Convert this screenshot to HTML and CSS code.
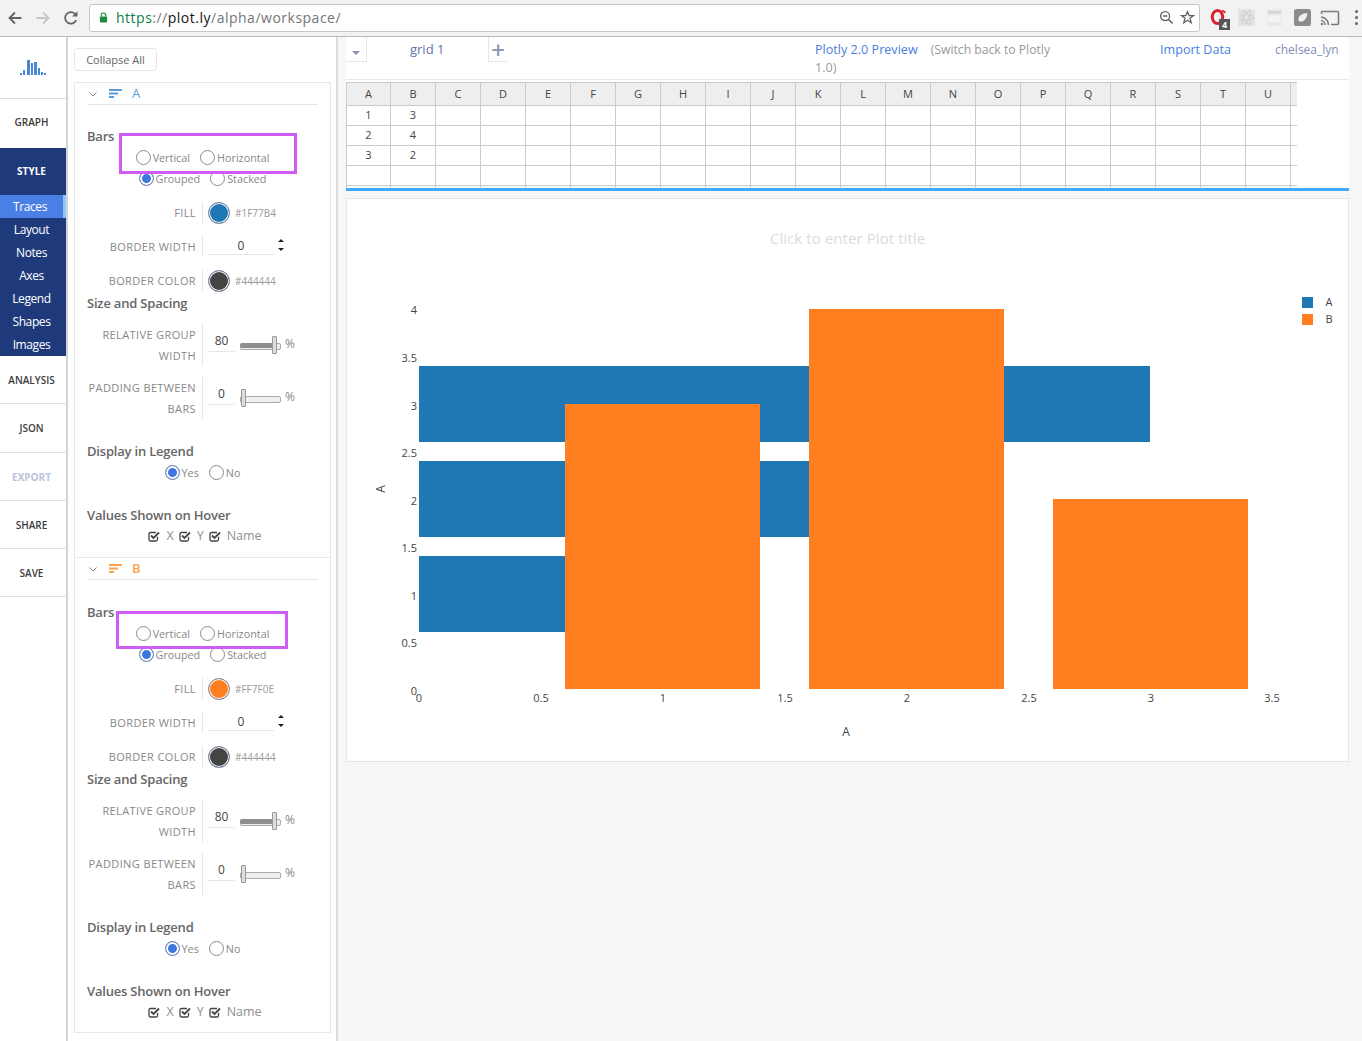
FILE: index.html
```html
<!DOCTYPE html>
<html lang="en">
<head>
    <meta charset="UTF-8">
    <title>plot.ly workspace</title>
    <link rel="stylesheet" href="styles.css">
</head>
<body>
    <header class="browser">
        <svg class="nav-icon" viewBox="0 0 16 16"><path d="M14.5 8H2.5M8 2.5L2.5 8L8 13.5" fill="none" stroke="#5f6368" stroke-width="1.8"/></svg>
        <svg class="nav-icon" viewBox="0 0 16 16"><path d="M1.5 8H13.5M8 2.5L13.5 8L8 13.5" fill="none" stroke="#c8c8c8" stroke-width="1.8"/></svg>
        <svg class="nav-icon" viewBox="0 0 16 16"><path d="M13.2 10.2A5.8 5.8 0 1 1 12.4 4.2" fill="none" stroke="#5f6368" stroke-width="1.8"/><path d="M14.5 1.2V6.6H9.1Z" fill="#5f6368"/></svg>
        <div class="url-box">
            <svg class="lock" viewBox="0 0 10 12"><path d="M2.5 5V3.5a2.5 2.5 0 0 1 5 0V5" fill="none" stroke="#1e8e3e" stroke-width="1.3"/><rect x="1" y="5" width="8" height="6.5" rx="0.8" fill="#1e8e3e"/></svg>
            <span class="url"><span class="url-https">https</span>://<span class="url-host">plot.ly</span>/alpha/workspace/</span>
            <svg class="url-icon" viewBox="0 0 16 16"><circle cx="6.5" cy="6.5" r="4.8" fill="none" stroke="#5f6368" stroke-width="1.4"/><path d="M4.2 6.5H8.8M10 10L14.5 14.5" fill="none" stroke="#5f6368" stroke-width="1.6"/></svg>
            <svg class="url-icon star" viewBox="0 0 16 16"><path d="M8 1.8L9.8 6H14.4L10.7 8.9L12 13.6L8 11L4 13.6L5.3 8.9L1.6 6H6.2Z" fill="none" stroke="#5f6368" stroke-width="1.4"/></svg>
        </div>
        <div class="extensions">
            <div class="ext-opera">
                <svg viewBox="0 0 18 20"><ellipse cx="7.5" cy="9" rx="5.2" ry="6.6" fill="none" stroke="#d9202c" stroke-width="3"/><path d="M12 2.5L15.5 4.5" stroke="#d9202c" stroke-width="2"/></svg>
                <span class="ext-badge">4</span>
            </div>
            <svg class="ext" viewBox="0 0 18 18"><rect width="18" height="18" fill="#e4e4e4"/><g fill="none" stroke="#cfcfcf"><ellipse cx="9" cy="9" rx="7.5" ry="3"/><ellipse cx="9" cy="9" rx="7.5" ry="3" transform="rotate(60 9 9)"/><ellipse cx="9" cy="9" rx="7.5" ry="3" transform="rotate(120 9 9)"/></g></svg>
            <svg class="ext" viewBox="0 0 18 18"><rect x="1" y="0" width="16" height="18" fill="#e9e9e9"/><rect x="2.5" y="2" width="13" height="3" fill="#d4d4d4"/><rect x="2.5" y="7" width="13" height="7" fill="#f4f4f4"/></svg>
            <svg class="ext" viewBox="0 0 18 18"><rect width="18" height="18" rx="3" fill="#8b8b8b"/><path d="M5 13C3.5 8 8 4 14 4.5C14 10 10.500 14.500 5 13Z" fill="#f2f2f2"/></svg>
            <svg class="ext ext-cast" viewBox="0 0 20 16"><path d="M1.5 4V2.500A1 1 0 0 1 2.500 1.500H17.500A1 1 0 0 1 18.500 2.500V13.500A1 1 0 0 1 17.500 14.500H11" fill="none" stroke="#7d7d7d" stroke-width="1.600"/><path d="M1 7A8 8 0 0 1 8.500 15M1 10.500A4.500 4.500 0 0 1 5.200 15" fill="none" stroke="#7d7d7d" stroke-width="1.500"/><circle cx="2" cy="14" r="1.300" fill="#7d7d7d"/></svg>
        </div>
        <div class="dots"><i></i><i></i><i></i></div>
    </header>

    <div class="app">
        <nav class="sidebar">
            <div class="logo">
                <svg viewBox="0 0 26 16" width="26" height="16">
                    <g fill="#4a86d8">
                        <rect x="0" y="14" width="2" height="2"/><rect x="3" y="11" width="2" height="5"/><rect x="7" y="1" width="3" height="15"/><rect x="11" y="4" width="2" height="12"/><rect x="14" y="3" width="3" height="13"/><rect x="18" y="9" width="2" height="7"/><rect x="21" y="13" width="2" height="3"/><rect x="24" y="14" width="2" height="2"/>
                    </g>
                </svg>
            </div>
            <a class="nav-item graph">GRAPH</a>
            <div class="nav-group">
                <div class="nav-title">STYLE</div>
                <a class="nav-sub active">Traces</a>
                <a class="nav-sub">Layout</a>
                <a class="nav-sub">Notes</a>
                <a class="nav-sub">Axes</a>
                <a class="nav-sub">Legend</a>
                <a class="nav-sub">Shapes</a>
                <a class="nav-sub">Images</a>
            </div>
            <a class="nav-item">ANALYSIS</a>
            <a class="nav-item">JSON</a>
            <a class="nav-item disabled">EXPORT</a>
            <a class="nav-item">SHARE</a>
            <a class="nav-item">SAVE</a>
        </nav>

        <aside class="panel">
            <button class="collapse-btn">Collapse All</button>

            <section class="trace trace-a">
                <div class="trace-head">
                    <svg class="chevron" viewBox="0 0 8 5"><path d="M0.500 0.500L4 4L7.500 0.500" fill="none" stroke="#888"/></svg>
                    <svg class="trace-icon" viewBox="0 0 13 9"><path d="M0 0H13V2H0ZM0 3.500H9V5.500H0ZM0 7H5V9H0Z" fill="#5b9bd5"/></svg>
                    <span class="trace-name">A</span>
                </div>
                <div class="highlight"></div>
                <h3 class="field-title bars-title">Bars</h3>
                <div class="radios"><span class="radio"><i></i>Vertical</span><span class="radio"><i></i>Horizontal</span></div>
                <div class="radios"><span class="radio on"><i></i>Grouped</span><span class="radio"><i></i>Stacked</span></div>

                <div class="control first">
                    <label>FILL</label>
                    <div class="control-body"><span class="swatch blue"></span><span class="hex">#1F77B4</span></div>
                </div>
                <div class="control">
                    <label>BORDER WIDTH</label>
                    <div class="control-body"><span class="num wide">0</span><span class="spinner"><i class="up"></i><i class="down"></i></span></div>
                </div>
                <div class="control">
                    <label>BORDER COLOR</label>
                    <div class="control-body"><span class="swatch dark"></span><span class="hex">#444444</span></div>
                </div>

                <h3 class="field-title spacing-title">Size and Spacing</h3>
                <div class="control tall">
                    <label>RELATIVE GROUP WIDTH</label>
                    <div class="control-body"><span class="num">80</span><span class="slider"><b class="fill"></b><b class="thumb"></b></span><span class="unit">%</span></div>
                </div>
                <div class="control tall">
                    <label>PADDING BETWEEN BARS</label>
                    <div class="control-body"><span class="num">0</span><span class="slider zero"><b class="thumb"></b></span><span class="unit">%</span></div>
                </div>

                <h3 class="field-title gap-title">Display in Legend</h3>
                <div class="radios"><span class="radio on"><i></i>Yes</span><span class="radio"><i></i>No</span></div>

                <h3 class="field-title gap-title">Values Shown on Hover</h3>
                <div class="checks">
                    <span class="check"><svg viewBox="0 0 12 12"><path d="M9.500 6.800V9.500A1.500 1.500 0 0 1 8 11H2.500A1.500 1.500 0 0 1 1 9.500V4A1.500 1.500 0 0 1 2.500 2.500H8" fill="none" stroke="#444" stroke-width="1.300"/><path d="M3 5.500L5.500 8L11 2.500" fill="none" stroke="#444" stroke-width="1.800"/></svg>X</span>
                    <span class="check"><svg viewBox="0 0 12 12"><path d="M9.500 6.800V9.500A1.500 1.500 0 0 1 8 11H2.500A1.500 1.500 0 0 1 1 9.500V4A1.500 1.500 0 0 1 2.500 2.500H8" fill="none" stroke="#444" stroke-width="1.300"/><path d="M3 5.500L5.500 8L11 2.500" fill="none" stroke="#444" stroke-width="1.800"/></svg>Y</span>
                    <span class="check"><svg viewBox="0 0 12 12"><path d="M9.500 6.800V9.500A1.500 1.500 0 0 1 8 11H2.500A1.500 1.500 0 0 1 1 9.500V4A1.500 1.500 0 0 1 2.500 2.500H8" fill="none" stroke="#444" stroke-width="1.300"/><path d="M3 5.500L5.500 8L11 2.500" fill="none" stroke="#444" stroke-width="1.800"/></svg>Name</span>
                </div>
            </section>

            <section class="trace trace-b">
                <div class="trace-head">
                    <svg class="chevron" viewBox="0 0 8 5"><path d="M0.500 0.500L4 4L7.500 0.500" fill="none" stroke="#888"/></svg>
                    <svg class="trace-icon" viewBox="0 0 13 9"><path d="M0 0H13V2H0ZM0 3.500H9V5.500H0ZM0 7H5V9H0Z" fill="#ffa04d"/></svg>
                    <span class="trace-name">B</span>
                </div>
                <div class="highlight"></div>
                <h3 class="field-title bars-title">Bars</h3>
                <div class="radios"><span class="radio"><i></i>Vertical</span><span class="radio"><i></i>Horizontal</span></div>
                <div class="radios"><span class="radio on"><i></i>Grouped</span><span class="radio"><i></i>Stacked</span></div>

                <div class="control first">
                    <label>FILL</label>
                    <div class="control-body"><span class="swatch orange"></span><span class="hex">#FF7F0E</span></div>
                </div>
                <div class="control">
                    <label>BORDER WIDTH</label>
                    <div class="control-body"><span class="num wide">0</span><span class="spinner"><i class="up"></i><i class="down"></i></span></div>
                </div>
                <div class="control">
                    <label>BORDER COLOR</label>
                    <div class="control-body"><span class="swatch dark"></span><span class="hex">#444444</span></div>
                </div>

                <h3 class="field-title spacing-title">Size and Spacing</h3>
                <div class="control tall">
                    <label>RELATIVE GROUP WIDTH</label>
                    <div class="control-body"><span class="num">80</span><span class="slider"><b class="fill"></b><b class="thumb"></b></span><span class="unit">%</span></div>
                </div>
                <div class="control tall">
                    <label>PADDING BETWEEN BARS</label>
                    <div class="control-body"><span class="num">0</span><span class="slider zero"><b class="thumb"></b></span><span class="unit">%</span></div>
                </div>

                <h3 class="field-title gap-title">Display in Legend</h3>
                <div class="radios"><span class="radio on"><i></i>Yes</span><span class="radio"><i></i>No</span></div>

                <h3 class="field-title gap-title">Values Shown on Hover</h3>
                <div class="checks">
                    <span class="check"><svg viewBox="0 0 12 12"><path d="M9.500 6.800V9.500A1.500 1.500 0 0 1 8 11H2.500A1.500 1.500 0 0 1 1 9.500V4A1.500 1.500 0 0 1 2.500 2.500H8" fill="none" stroke="#444" stroke-width="1.300"/><path d="M3 5.500L5.500 8L11 2.500" fill="none" stroke="#444" stroke-width="1.800"/></svg>X</span>
                    <span class="check"><svg viewBox="0 0 12 12"><path d="M9.500 6.800V9.500A1.500 1.500 0 0 1 8 11H2.500A1.500 1.500 0 0 1 1 9.500V4A1.500 1.500 0 0 1 2.500 2.500H8" fill="none" stroke="#444" stroke-width="1.300"/><path d="M3 5.500L5.500 8L11 2.500" fill="none" stroke="#444" stroke-width="1.800"/></svg>Y</span>
                    <span class="check"><svg viewBox="0 0 12 12"><path d="M9.500 6.800V9.500A1.500 1.500 0 0 1 8 11H2.500A1.500 1.500 0 0 1 1 9.500V4A1.500 1.500 0 0 1 2.500 2.500H8" fill="none" stroke="#444" stroke-width="1.300"/><path d="M3 5.500L5.500 8L11 2.500" fill="none" stroke="#444" stroke-width="1.800"/></svg>Name</span>
                </div>
            </section>
        </aside>

        <main class="workspace">
            <div class="grid-area">
                <div class="topbar">
                    <div class="tabs">
                        <span class="tab-caret"><i></i></span>
                        <span class="tab-name">grid 1</span>
                        <span class="tab-add">+</span>
                    </div>
                    <div class="preview">
                        <div><a>Plotly 2.0 Preview</a><span>(Switch back to Plotly</span></div>
                        <div>1.0)</div>
                    </div>
                    <a class="import">Import Data</a>
                    <a class="user">chelsea_lyn</a>
                </div>
                <div class="sheet">
                    <table>
                        <thead>
                            <tr><th class="col-a">A</th><th>B</th><th>C</th><th>D</th><th>E</th><th>F</th><th>G</th><th>H</th><th>I</th><th>J</th><th>K</th><th>L</th><th>M</th><th>N</th><th>O</th><th>P</th><th>Q</th><th>R</th><th>S</th><th>T</th><th>U</th><th class="stub"></th></tr>
                        </thead>
                        <tbody>
                            <tr><td>1</td><td>3</td><td></td><td></td><td></td><td></td><td></td><td></td><td></td><td></td><td></td><td></td><td></td><td></td><td></td><td></td><td></td><td></td><td></td><td></td><td></td><td class="stub"></td></tr>
                            <tr><td>2</td><td>4</td><td></td><td></td><td></td><td></td><td></td><td></td><td></td><td></td><td></td><td></td><td></td><td></td><td></td><td></td><td></td><td></td><td></td><td></td><td></td><td class="stub"></td></tr>
                            <tr><td>3</td><td>2</td><td></td><td></td><td></td><td></td><td></td><td></td><td></td><td></td><td></td><td></td><td></td><td></td><td></td><td></td><td></td><td></td><td></td><td></td><td></td><td class="stub"></td></tr>
                            <tr><td></td><td></td><td></td><td></td><td></td><td></td><td></td><td></td><td></td><td></td><td></td><td></td><td></td><td></td><td></td><td></td><td></td><td></td><td></td><td></td><td></td><td class="stub"></td></tr>
                            <tr><td></td><td></td><td></td><td></td><td></td><td></td><td></td><td></td><td></td><td></td><td></td><td></td><td></td><td></td><td></td><td></td><td></td><td></td><td></td><td></td><td></td><td class="stub"></td></tr>
                        </tbody>
                    </table>
                </div>
            </div>

            <div class="chart-box">
                <!-- chart drawn in page coordinates, hence the translate -->
                <svg class="chart" width="1001" height="562" viewBox="0 0 1001 562">
                    <g transform="translate(-347 -199)">
                        <text class="plot-title" x="847.500" y="244" text-anchor="middle">Click to enter Plot title</text>

                        <g fill="#1f77b4">
                            <rect x="419" y="556" width="244" height="76"/>
                            <rect x="419" y="461" width="488" height="76"/>
                            <rect x="419" y="366" width="731" height="76"/>
                        </g>
                        <g fill="#ff7f20">
                            <rect x="565" y="404" width="195" height="285"/>
                            <rect x="809" y="309" width="195" height="380"/>
                            <rect x="1053" y="499" width="195" height="190"/>
                        </g>

                        <g class="tick" text-anchor="end">
                            <text x="417" y="314">4</text>
                            <text x="417" y="362">3.5</text>
                            <text x="417" y="410">3</text>
                            <text x="417" y="457">2.5</text>
                            <text x="417" y="505">2</text>
                            <text x="417" y="552">1.5</text>
                            <text x="417" y="600">1</text>
                            <text x="417" y="647">0.5</text>
                            <text x="417" y="695">0</text>
                        </g>
                        <g class="tick" text-anchor="middle">
                            <text x="419" y="702">0</text>
                            <text x="541" y="702">0.5</text>
                            <text x="663" y="702">1</text>
                            <text x="785" y="702">1.5</text>
                            <text x="907" y="702">2</text>
                            <text x="1029" y="702">2.5</text>
                            <text x="1151" y="702">3</text>
                            <text x="1272" y="702">3.5</text>
                        </g>

                        <text class="axis-title" x="846" y="736" text-anchor="middle">A</text>
                        <text class="axis-title" transform="translate(385 489) rotate(-90)" text-anchor="middle">A</text>

                        <rect x="1302" y="297" width="11" height="11" fill="#1f77b4"/>
                        <rect x="1302" y="314" width="11" height="11" fill="#ff7f20"/>
                        <text class="tick" x="1329" y="306" text-anchor="middle">A</text>
                        <text class="tick" x="1329" y="323" text-anchor="middle">B</text>
                    </g>
                </svg>
            </div>
        </main>
    </div>
</body>
</html>
```
FILE: styles.css
```css
* { box-sizing: border-box; }
html, body { margin: 0; height: 100%; overflow: hidden; }
body { font-family: "Open Sans", sans-serif; background: #fff; color: #444; }
a { cursor: pointer; }

/* browser chrome */
.browser { height: 37px; display: flex; align-items: center; background: #f2f2f2; border-bottom: 1px solid #bcbcbc; padding: 0 0 1px 7px; }
.nav-icon { width: 16px; height: 16px; margin-right: 12px; flex: none; }
.url-box { width: 1111px; height: 28px; margin-left: -2px; display: flex; align-items: center; background: #fff; border: 1px solid #c6c6c6; border-radius: 3px; padding: 0 4px 0 9px; }
.lock { width: 9px; height: 11px; flex: none; }
.url { margin-left: 8px; font-size: 14px; letter-spacing: 0.5px; color: #757575; flex: 1; white-space: nowrap; }
.url-https { color: #0b8043; }
.url-host { color: #111; }
.url-icon { width: 15px; height: 15px; margin-left: 6px; flex: none; }
.extensions { display: flex; align-items: center; margin-left: 10px; }
.ext-opera { position: relative; width: 18px; height: 20px; margin-right: 10px; }
.ext-opera svg { display: block; width: 18px; height: 20px; }
.ext-badge { position: absolute; left: 9px; top: 11px; width: 11px; height: 11px; background: #555; color: #fff; font-size: 9px; font-weight: 700; line-height: 11px; text-align: center; }
.ext { width: 17px; height: 17px; margin-right: 11px; flex: none; }
.ext-cast { width: 20px; height: 16px; margin: 0 0 0 -2px; }
.dots { margin-left: 15px; display: flex; flex-direction: column; gap: 3px; }
.dots i { width: 3px; height: 3px; background: #666; border-radius: 50%; }

.app { display: flex; height: 1004px; }

/* left nav */
.sidebar { width: 68px; flex: none; background: #fff; border-right: 2px solid #d4d4d4; }
.logo { height: 62px; display: flex; align-items: center; justify-content: center; border-bottom: 1px solid #ddd; padding: 0 1px 1px 0; }
.nav-item { display: flex; align-items: center; justify-content: center; height: 48.300px; padding-right: 3px; font-size: 10px; font-weight: 600; color: #3c3c3c; border-bottom: 1px solid #e2e2e2; }
.nav-item.graph { height: 49px; padding-bottom: 4px; border-bottom: 0; }
.nav-item.disabled { padding-top: 1px; color: #b8c4da; font-weight: 700; }
.nav-group { background: #1f3a7b; height: 208px; }
.nav-title { height: 47px; padding: 0 3px 2px 0; display: flex; align-items: center; justify-content: center; font-size: 10px; font-weight: 700; color: #fff; }
.nav-sub { display: flex; align-items: center; justify-content: center; height: 23px; padding-right: 3px; font-size: 12px; letter-spacing: -0.4px; color: #fff; }
.nav-sub.active { background: #4a80e4; border-right: 3px solid #93c4f6; }

/* trace panel */
.panel { width: 270px; flex: none; background: #fff; border-right: 2px solid #dcdcdc; padding: 11px 6px 0 6px; }
.collapse-btn { display: block; width: 83px; height: 23px; padding: 0; background: #fff; border: 1px solid #e6e6e6; border-radius: 3px; font: 400 11px "Open Sans", sans-serif; color: #666; }
.trace { position: relative; width: 257px; border: 1px solid #e8e8e8; border-bottom: 0; padding-bottom: 10px; }
.trace-a { margin-top: 11px; padding-bottom: 11px; }
.trace-b { border-bottom: 1px solid #e8e8e8; }
.trace-head { display: flex; align-items: center; height: 22px; margin: 0 12px; padding-bottom: 1px; border-bottom: 1px solid #e6e6e6; }
.chevron { width: 8px; height: 5px; margin: 3px 0 0 2px; }
.trace-icon { width: 13px; height: 9px; margin-left: 12px; }
.trace-name { margin-left: 10px; font-size: 13px; }
.trace-a .trace-name { color: #5b9bd5; }
.trace-b .trace-name { color: #ffa04d; font-weight: 600; }

.highlight { position: absolute; border: 3px solid #cf5cf5; z-index: 1; }
.trace-a .highlight { left: 44px; top: 50px; width: 178px; height: 41px; }
.trace-b .highlight { left: 41px; top: 53px; width: 172px; height: 38px; }

.field-title { margin: 0 12px; height: 21px; font-size: 13px; font-weight: 600; letter-spacing: -0.2px; line-height: 21px; color: #666; }
.bars-title { margin-top: 21px; }
.trace-b .bars-title { margin-top: 22px; }
.spacing-title { margin-top: 4px; margin-bottom: 12px; height: 17px; line-height: 17px; }
.gap-title { margin-top: 22px; }

.radios { height: 21px; display: flex; justify-content: center; align-items: center; gap: 10px; font-size: 10.800px; color: #888; }
.radio { display: flex; align-items: center; gap: 2px; }
.radio i { width: 15px; height: 15px; border: 1px solid #8a8a8a; border-radius: 50%; background: #fff; }
.radio.on i { background: #3f77e0; box-shadow: inset 0 0 0 2px #fff; border-color: #7d8ba8; }

.control { display: flex; align-items: center; height: 21px; margin-top: 13px; }
.control label { width: 121px; padding-left: 12px; text-align: right; font-size: 11px; letter-spacing: 0.38px; line-height: 21px; color: #888; }
.control-body { display: flex; align-items: center; height: 100%; margin-left: 6px; padding-left: 5px; border-left: 1px solid #e6e6e6; }
.control.tall { height: 42px; margin-top: 11px; }
.spacing-title + .control.tall { margin-top: 0; }
.swatch { width: 22px; height: 22px; border-radius: 50%; border: 1px solid #7d8ba8; box-shadow: inset 0 0 0 1px #fff; }
.swatch.blue { background: #1f77b4; }
.swatch.orange { background: #ff7f20; }
.swatch.dark { background: #444; }
.hex { margin-left: 5px; font-size: 10px; color: #999; }
.num { width: 27px; height: 20px; text-align: center; font-size: 12px; line-height: 18px; color: #444; border-bottom: 1px solid #e6e6e6; }
.tall .num { margin-bottom: 6px; }
.num.wide { width: 66px; margin-bottom: 4px; line-height: 21px; }
.spinner { display: flex; flex-direction: column; gap: 6px; margin-left: 4px; margin-bottom: 3px; }
.spinner i { width: 0; height: 0; border-left: 3px solid transparent; border-right: 3px solid transparent; }
.spinner .up { border-bottom: 3px solid #222; }
.spinner .down { border-top: 3px solid #222; }
.slider { position: relative; width: 41px; height: 18px; margin-left: 5px; }
.slider::before { content: ""; position: absolute; left: 0; right: 0; top: 7px; height: 5px; border: 1px solid #aaa; border-radius: 2px; background: #eee; }
.slider .fill { position: absolute; left: 0; right: 7px; top: 7px; height: 5px; border-radius: 2px; background: #8e8e8e; }
.slider .thumb { position: absolute; left: 32px; top: 0; width: 5px; height: 18px; background: #ddd; border: 1px solid #999; border-radius: 1px; }
.slider.zero .thumb { left: 1px; }
.unit { margin: 0 0 4px 4px; font-size: 12px; color: #888; }

.checks { height: 21px; margin-top: -1px; padding-left: 5px; display: flex; justify-content: center; align-items: center; gap: 5px; font-size: 12.500px; color: #8f8f8f; }
.check { display: flex; align-items: center; gap: 6px; }
.check svg { width: 12px; height: 12px; }

/* main area */
.workspace { flex: 1; background: #f7f7f7; padding-left: 8px; width: 1024px; }
.grid-area { width: 1003px; background: #fff; }
.topbar { display: flex; height: 43px; border-bottom: 1px solid #e8e8e8; font-size: 12.600px; }
.tabs { display: flex; align-items: flex-start; height: 25px; width: 469px; font-size: 13px; }
.tab-caret { width: 21px; height: 25px; border-right: 1px solid #e6e6e6; border-bottom: 1px solid #e6e6e6; display: flex; align-items: center; justify-content: center; }
.tab-caret i { width: 0; height: 0; margin-top: 7px; border-left: 4px solid transparent; border-right: 4px solid transparent; border-top: 4px solid #8a96ad; }
.tab-name { width: 121px; padding: 2px 0 0 43px; color: #5f76a8; line-height: 20px; }
.tab-add { width: 19px; height: 25px; border-left: 1px solid #e6e6e6; border-bottom: 1px solid #e6e6e6; text-align: center; font-size: 24px; font-weight: 600; line-height: 25px; color: #8a9ab8; }
.preview { width: 345px; padding-top: 4px; line-height: 18px; color: #999; }
.preview a { color: #4a80dc; margin-right: 13px; }
.preview span { font-size: 12.200px; }
.import { width: 115px; padding-top: 4px; line-height: 18px; color: #4a80dc; }
.user { padding-top: 4px; line-height: 18px; color: #7f8fb5; font-size: 12px; }
.sheet { height: 111px; padding-top: 2px; overflow: hidden; border-bottom: 3px solid #44a8fb; }
.sheet table { border-collapse: collapse; table-layout: fixed; width: 950px; }
.sheet th, .sheet td { width: 45px; padding: 0 0 2px; border: 1px solid #cbcbcb; text-align: center; font-size: 11px; font-weight: 400; color: #444; }
.sheet th { height: 23px; background: #eee; }
.sheet td { height: 20px; }
.sheet th.col-a { width: 44px; }
.sheet th.stub, .sheet td.stub { width: 6px; border-right: 0; }
.chart-box { width: 1003px; height: 564px; margin-top: 7px; background: #fff; border: 1px solid #e6e6e6; }
.chart { display: block; }
.plot-title { font-size: 15.200px; fill: #dcdcdc; }
.tick { font-size: 11px; fill: #444; }
.axis-title { font-size: 12px; fill: #444; }
```
